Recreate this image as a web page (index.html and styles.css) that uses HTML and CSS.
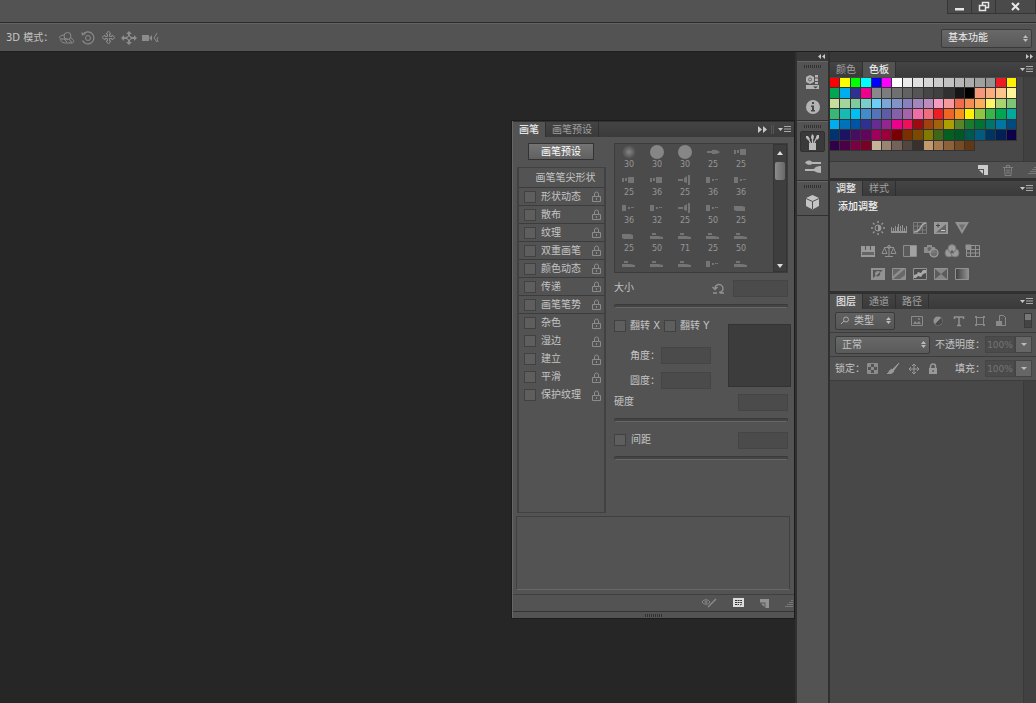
FILE: index.html
```html
<!DOCTYPE html>
<html lang="zh-CN">
<head>
<meta charset="utf-8">
<title>画笔</title>
<link rel="stylesheet" href="styles.css">
</head>
<body>
<svg class="defs" aria-hidden="true">
  <symbol id="menu" viewBox="0 0 13 8"><path d="M0 2h5L2.500 5z" fill="#c8c8c8"/><path d="M6 .5h7M6 3h7M6 5.500h7" stroke="#a8a8a8"/></symbol>
  <symbol id="lock" viewBox="0 0 9 11"><path d="M2.500 5V3a2 2 0 0 1 4 0v2M.5 5.500h8v5h-8zM4.500 7v2" fill="none" stroke="#8c8c8c"/></symbol>
  <symbol id="page" viewBox="0 0 10 10"><path d="M0 0h10v10H6V4H0z"/><path d="M1 5h4v4z"/></symbol>
  <symbol id="grab" viewBox="0 0 8 8"><path d="M0 7.500h8M2 5.500h6M4 3.500h4M6 1.500h2" stroke="#777"/></symbol>
</svg>

<header class="titlebar">
  <button class="win" aria-label="最小化"><svg width="12" height="12"><path d="M1 7h9v2.500H1z" fill="#e6e6e6"/></svg></button>
  <button class="win" aria-label="还原"><svg width="12" height="12" fill="none" stroke="#e6e6e6" stroke-width="1.500"><path d="M4.500 4V1.500h6v5H8"/><path d="M1.500 4.500h6v5h-6z"/></svg></button>
  <button class="win win-close" aria-label="关闭"><svg width="12" height="12"><path d="M2 2l7 7M9 2L2 9" stroke="#e6e6e6" stroke-width="2"/></svg></button>
</header>

<div class="optionbar">
  <span class="mode">3D 模式：</span>
  <div class="modes">
    <button aria-label="旋转"><svg width="17" height="14" fill="none" stroke="#8c8c8c"><circle cx="9.500" cy="5" r="3.500"/><path d="M6 4C1 4 0 8 4 8h6M3 8c-1 3 2 4 6 4h5c3-1 2-3-1-5M6 8l3 3M11 8l3 4"/></svg></button>
    <button aria-label="滚动"><svg width="16" height="14" fill="none" stroke="#8c8c8c"><circle cx="8" cy="7" r="2.500"/><path d="M3 3.500A6 6 0 1 1 2.500 9.500M1.500 3h4M2 1.500l1 3" stroke-width="1.200"/></svg></button>
    <button aria-label="拖动"><svg width="15" height="15" fill="none" stroke="#8c8c8c"><path d="M6.500 6.500V4H5l2.500-3L10 4H8.500v2.500H11V5l3 2.500L11 10V8.500H8.500V11H10l-2.500 3L5 11h1.500V8.500H4V10L1 7.500 4 5v1.500z"/></svg></button>
    <button aria-label="滑动"><svg width="16" height="14" fill="#8c8c8c"><path d="M8 0l3 3H9v2l2 1h2V4l3 3-3 3V8h-2L9 9v2h2l-3 3-3-3h2V9L5 8H3v2L0 7l3-3v2h2l2-1V3H5z"/><circle cx="8" cy="7" r="1.500" fill="#535353"/></svg></button>
    <button aria-label="缩放"><svg width="17" height="12"><path d="M0 3h7v6H0zM7 6l3-3v6z" fill="#8c8c8c"/><path d="M15 1l-3 5 3 4M16 5l-1 2 1 3" fill="none" stroke="#8c8c8c"/></svg></button>
  </div>
  <select class="select workspace-select" aria-label="工作区"><option>基本功能</option></select>
</div>

<div class="workspace">
  <main class="canvas">
    <section class="brush" aria-label="画笔">
      <div class="tabs">
        <button class="tab active">画笔</button><button class="tab">画笔预设</button>
        <span class="spacer"></span>
        <svg width="9" height="7"><path d="M0 0l4 3.500L0 7zM5 0l4 3.500L5 7z" fill="#c8c8c8"/></svg>
        <span class="split"></span>
        <button class="plain" aria-label="菜单"><svg width="13" height="8"><use href="#menu"/></svg></button>
      </div>
      <div class="brush-body">
        <div class="brush-left">
          <button class="preset">画笔预设</button>
          <div class="options" id="options"><button class="tip">画笔笔尖形状</button></div>
        </div>
        <div class="brush-right">
          <div class="tips">
            <div class="tip-grid" id="tips"></div>
            <div class="scroll"><svg width="6" height="4"><path d="M0 4l3-4 3 4z" fill="#ddd"/></svg><span class="thumb"></span><svg width="6" height="4"><path d="M0 0h6L3 4z" fill="#ddd"/></svg></div>
          </div>
          <div class="row size-row">
            <label for="size">大小</label><span class="spacer"></span>
            <button class="plain" aria-label="恢复"><svg width="13" height="12" fill="none" stroke="#929292" stroke-width="1.400"><path d="M3 6a4 4 0 1 1 4 4.500M.5 5L3 7.500 5.500 5M1 11h4M8 11h4"/></svg></button>
            <input class="field wide" id="size" type="text">
          </div>
          <input class="slider" type="range" aria-label="大小滑块">
          <div class="shape">
            <div class="shape-fields">
              <div class="flips"><label><input type="checkbox"> 翻转 X</label><label><input type="checkbox"> 翻转 Y</label></div>
              <div class="row angle"><label for="angle">角度：</label><input class="field" id="angle" type="text"></div>
              <div class="row angle"><label for="round">圆度：</label><input class="field" id="round" type="text"></div>
            </div>
            <div class="compass"></div>
          </div>
          <div class="row hard-row"><label for="hard">硬度</label><span class="spacer"></span><input class="field" id="hard" type="text"></div>
          <input class="slider" type="range" aria-label="硬度滑块">
          <div class="row space-row"><label><input type="checkbox"> 间距</label><span class="spacer"></span><input class="field" type="text" aria-label="间距值"></div>
          <input class="slider" type="range" aria-label="间距滑块">
        </div>
      </div>
      <div class="preview"></div>
      <div class="brush-foot">
        <button class="plain" aria-label="切换预览"><svg width="16" height="10" fill="none" stroke="#8a8a8a"><path d="M1 4c2-3 6-3 8 0-2 3-6 3-8 0z"/><path d="M15 1L9 7M10 6L7 9" stroke-width="1.500"/><circle cx="5" cy="4" r="1"/></svg></button>
        <button class="plain" aria-label="预设管理器"><svg width="11" height="10"><path d="M0 0h11v9H0z" fill="#ddd"/><path d="M2 2.500h7M2 4.500h7M2 6.500h4M7 7l2-1" stroke="#333" stroke-dasharray="2 .6"/></svg></button>
        <button class="plain" aria-label="新建画笔"><svg width="9" height="9" fill="#929292"><use href="#page"/></svg></button>
        <svg width="8" height="8"><use href="#grab"/></svg>
      </div>
      <div class="handle"><span class="grip"></span></div>
    </section>
  </main>

  <aside class="strip">
    <div class="dock-top"><svg width="7" height="5"><path d="M3 0v5L0 2.500zM7 0v5L4 2.500z" fill="#c8c8c8"/></svg></div>
    <div class="group"><span class="grip"></span>
      <button aria-label="历史记录"><svg width="15" height="16" fill="#b4b4b4"><path d="M1 3l4-2 4 2v5l-4 2-4-2z"/><circle cx="5" cy="5.500" r="1.500" fill="none" stroke="#666"/><path d="M10 1h3v2.500h-3zM10 4.500h3V7h-3zM10 8h3v2h-3zM1 11h13v4H1z"/><path d="M8 12.500h5l-2.500 2z" fill="#444"/></svg></button>
      <button aria-label="信息"><svg width="16" height="16"><circle cx="8" cy="8" r="7" fill="#b4b4b4"/><path d="M7 3h2v2H7zM6 6.500h3V11h1v1.500H6V11h1V8H6z" fill="#484848"/></svg></button>
    </div>
    <div class="group"><span class="grip"></span>
      <button class="on" aria-label="画笔"><svg width="15" height="18" fill="#bcbcbc"><path d="M4 10h7v7H4z"/><path d="M5.500 10L3 5M7.500 10V4M9 10l3-6" stroke="#bcbcbc" stroke-width="1.300"/><path d="M1 3l2 0 2 3-2 1-2-2zM6 4l1-3 2 2-.5 3h-2zM11 4l1-2 2 0 0 3-2 2z"/></svg></button>
      <button aria-label="画笔预设"><svg width="18" height="15" fill="#b4b4b4"><path d="M1 4c2-3 5-3 7-1h9v2H8C5 7 3 5 1 4zM1 10h9c2-3 5-3 7-3l0 7c-3 0-5-1-7-2H1z"/></svg></button>
    </div>
    <div class="group"><span class="grip"></span>
      <button aria-label="3D"><svg width="15" height="16"><path d="M7.500 1L14 4v8l-6.500 3.500L1 12V4z" fill="#c4c4c4"/><path d="M1 4.500l6.500 3 6.500-3M7.500 7.500V15" fill="none" stroke="#505050"/></svg></button>
    </div>
  </aside>

  <aside class="panels">
    <div class="dock-top"><svg width="7" height="5"><path d="M0 0v5l3-2.500zM4 0v5l3-2.500z" fill="#c8c8c8"/></svg></div>
    <section class="panel">
      <div class="tabs"><button class="tab">颜色</button><button class="tab active">色板</button><span class="spacer"></span><button class="plain" aria-label="菜单"><svg width="13" height="8"><use href="#menu"/></svg></button></div>
      <div class="swatch-area"><div class="swatches" id="swatches"></div><span class="track"></span></div>
      <div class="foot"><button class="plain" aria-label="新建色板"><svg width="10" height="10" fill="#ccc"><use href="#page"/></svg></button><button class="plain" aria-label="删除"><svg width="10" height="11" fill="none" stroke="#808080"><path d="M0 2.500h10M3.500 2V.5h3V2M1.500 3l.5 7.500h6l.5-7.500M4 4v5M6 4v5"/></svg></button><svg width="8" height="8"><use href="#grab"/></svg></div>
    </section>
    <section class="panel">
      <div class="tabs"><button class="tab active">调整</button><button class="tab">样式</button><span class="spacer"></span><button class="plain" aria-label="菜单"><svg width="13" height="8"><use href="#menu"/></svg></button></div>
      <div class="adjust">
        <h2>添加调整</h2>
        <div class="adj-row">
          <button aria-label="亮度"><svg width="16" height="14"><circle cx="8" cy="7" r="3" fill="none" stroke="#999"/><path d="M8 4a3 3 0 0 1 0 6z" fill="#999"/><path d="M8 0v2M8 12v2M1 7h2M13 7h2M3 2l1.500 1.500M11.500 10.500L13 12M3 12l1.500-1.500M11.500 3.500L13 2" stroke="#999" stroke-width="1.400"/></svg></button>
          <button aria-label="色阶"><svg width="16" height="14"><path d="M0 10h16v2H0zM0 6h1v4H0zM2 7h1v3H2zM4 5h1v5H4zM6 6h1v4H6zM7 3h1v7H7zM9 5h1v5H9zM11 4h1v6h-1zM13 7h1v3h-1zM15 5h1v5h-1z" fill="#949494"/></svg></button>
          <button aria-label="曲线"><svg width="16" height="14" fill="none" stroke="#7c7c7c"><path d="M1.500 1.500h13v11h-13zM5.500 2v10M10.500 2v10M2 5h12M2 9h12"/><path d="M2 11c8 0 5-8 12-9" stroke="#aaa" stroke-width="1.500"/></svg></button>
          <button aria-label="曝光度"><svg width="16" height="14"><path d="M1 1h14v12H1z" fill="#999"/><path d="M3 11.500L13 3v8.500z" fill="#666"/><path d="M3 4.500h4M5 2.500v4" stroke="#444"/><path d="M8 9.500h4" stroke="#ccc"/></svg></button>
          <button aria-label="自然饱和度"><svg width="16" height="14"><path d="M1 1h14L8 13z" fill="#929292"/><path d="M5 3.500h6L8 9z" fill="#707070"/></svg></button>
        </div>
        <div class="adj-row">
          <button aria-label="色相"><svg width="16" height="14"><path d="M1 2h14v11H1z" fill="#999"/><path d="M2 8h12v3H2z" fill="#656565"/><path d="M5.500 2v4M10.500 2v4" stroke="#555"/></svg></button>
          <button aria-label="色彩平衡"><svg width="16" height="14" fill="none" stroke="#929292"><path d="M8 1v11M4 12.500h8M3 3.500h10M3.500 4L1 9.500h5zM12.500 4L10 9.500h5z"/><circle cx="8" cy="3" r="1.500"/></svg></button>
          <button aria-label="黑白"><svg width="16" height="14"><path d="M1.500 1.500h13v11h-13z" fill="#5b5b5b" stroke="#8c8c8c"/><path d="M8 2h6v10H8z" fill="#a2a2a2"/></svg></button>
          <button aria-label="照片滤镜"><svg width="16" height="14"><path d="M1 3h3V1h5v2h3v6H1z" fill="#8c8c8c"/><circle cx="6.500" cy="5" r="2" fill="#666"/><circle cx="11" cy="9" r="4" fill="#777" fill-opacity=".8" stroke="#a0a0a0" stroke-width="1.200"/></svg></button>
          <button aria-label="通道混合器"><svg width="16" height="14" fill="#999" stroke="#777"><circle cx="5" cy="9" r="4"/><circle cx="11" cy="9" r="4"/><circle cx="8" cy="4.500" r="4"/><path d="M8 6l2 3H6z" fill="#444"/></svg></button>
          <button aria-label="颜色查找"><svg width="16" height="14" fill="none" stroke="#929292"><path d="M1.500 1.500h13v11h-13zM5.500 2v10M10.500 2v10M2 5.500h12M2 9h12"/><path d="M1 1h5v4H1z" fill="#929292"/></svg></button>
        </div>
        <div class="adj-row">
          <button aria-label="反相"><svg width="16" height="14"><path d="M1 1h14v12H1z" fill="#929292"/><path d="M3 3h10L3 11z" fill="#555"/><circle cx="8" cy="7" r="3" fill="#929292"/><path d="M10 5a3 3 0 0 1-4 4z" fill="#555"/></svg></button>
          <button aria-label="色调分离"><svg width="16" height="14"><path d="M1.500 1.500h13v11h-13z" fill="#686868" stroke="#929292"/><path d="M2 9l8-7h4L2 12zM9 12l5-4v4z" fill="#8e8e8e"/></svg></button>
          <button aria-label="阈值"><svg width="16" height="14"><path d="M1.500 1.500h13v11h-13z" fill="#4c4c4c" stroke="#929292"/><path d="M2 8l3-1 1-2 3 1 2-3h3v3l-3 1-2 3-3-1-2 2H2z" fill="#aaa"/></svg></button>
          <button aria-label="可选颜色"><svg width="16" height="14"><path d="M1.500 1.500h13v11h-13z" fill="#888" stroke="#929292"/><path d="M2 2l6 5-6 5zM14 2L8 7l6 5z" fill="#5c5c5c"/></svg></button>
          <button aria-label="渐变映射"><svg width="16" height="14"><linearGradient id="fade"><stop stop-color="#3e3e3e"/><stop offset="1" stop-color="#929292"/></linearGradient><path d="M1.500 1.500h13v11h-13z" fill="url(#fade)" stroke="#929292"/></svg></button>
        </div>
      </div>
    </section>
    <section class="panel layers">
      <div class="tabs"><button class="tab active">图层</button><button class="tab">通道</button><button class="tab">路径</button><span class="spacer"></span><button class="plain" aria-label="菜单"><svg width="13" height="8"><use href="#menu"/></svg></button></div>
      <div class="bar filter">
        <select class="select kind" aria-label="类型"><option>类型</option></select>
        <div class="filters">
          <button aria-label="像素"><svg width="12" height="12"><path d="M.5 1.500h11v9H.5z" fill="none" stroke="#8a8a8a"/><path d="M2 9l2-3 2 2 2-2 2 3z" fill="#8a8a8a"/><circle cx="8" cy="4" r="1" fill="#8a8a8a"/></svg></button>
          <button aria-label="调整图层"><svg width="12" height="12"><circle cx="6" cy="6" r="4.500" fill="#929292"/><path d="M3 9l6-6a4 4 0 0 1-6 6z" fill="#4a4a4a"/></svg></button>
          <button aria-label="文字图层"><svg width="12" height="12"><path d="M1.500 4V2h9v2M6 2v8.500M4 10.500h4" fill="none" stroke="#929292" stroke-width="1.500"/></svg></button>
          <button aria-label="形状图层"><svg width="12" height="12" fill="none" stroke="#8a8a8a"><path d="M2.500 1v10M9.500 1v10M1 2.500h10M1 9.500h10"/><path d="M1 1h2v2H1zM9 1h2v2H9zM1 9h2v2H1zM9 9h2v2H9z" fill="#8a8a8a" stroke="none"/></svg></button>
          <button aria-label="智能对象"><svg width="12" height="12"><path d="M4.500.5h4l2 2v8h-6z" fill="none" stroke="#8a8a8a"/><path d="M1 6h6v5H1z" fill="#8a8a8a"/></svg></button>
        </div>
        <button class="toggle" aria-label="开关过滤"></button>
      </div>
      <div class="bar">
        <select class="select blend" aria-label="混合模式"><option>正常</option></select>
        <label class="push" for="opacity">不透明度：</label><input class="percent" id="opacity" value="100%"><button class="drop" aria-label="不透明度选项"></button>
      </div>
      <div class="bar">
        <span>锁定：</span>
        <div class="locks">
          <button aria-label="透明像素"><svg width="11" height="11"><path d="M.5.500h10v10H.5z" fill="none" stroke="#8c8c8c"/><path d="M1 1h3v3H1zM7 1h3v3H7zM4 4h3v3H4zM1 7h3v3H1zM7 7h3v3H7z" fill="#8c8c8c"/></svg></button>
          <button aria-label="图像像素"><svg width="14" height="11"><path d="M13 0L7 6l1 1zM6 6l2 2c-1 2-3 3-7 3 2-1 2-4 5-5z" fill="#999" stroke="#999"/></svg></button>
          <button aria-label="位置"><svg width="12" height="12" fill="none" stroke="#999"><path d="M6 1v10M1 6h10M4 3l2-2 2 2M4 9l2 2 2-2M3 4L1 6l2 2M9 4l2 2-2 2"/></svg></button>
          <button aria-label="全部"><svg width="10" height="12"><path d="M2.500 5V3.500a2.500 2.500 0 0 1 5 0V5" fill="none" stroke="#999" stroke-width="1.500"/><path d="M1 5h8v6H1z" fill="#999"/><path d="M5 7v2" stroke="#444"/></svg></button>
        </div>
        <label class="push" for="fill">填充：</label><input class="percent" id="fill" value="100%"><button class="drop" aria-label="填充选项"></button>
      </div>
      <div class="layer-list"><span class="track"></span></div>
    </section>
  </aside>
</div>
<script src="script.js"></script>
</body>
</html>
```
FILE: styles.css
```css
* { box-sizing: border-box; }
body {
  margin: 0;
  height: 100vh;
  display: flex;
  flex-direction: column;
  overflow: hidden;
  background: #262626;
  color: #c4c4c4;
  font: 10px/14px "DejaVu Sans", "Noto Sans CJK SC", sans-serif;
}
button, input, select { font: inherit; color: inherit; margin: 0; padding: 0; }
button { border: 0; background: none; display: flex; align-items: center; justify-content: center; }
svg { display: block; flex: none; }
.defs { display: none; }
.spacer { flex: 1; }
.titlebar {
  flex: none;
  height: 23px;
  display: flex;
  justify-content: flex-end;
  align-items: flex-start;
  background: #535353;
  border-bottom: 1px solid #2c2c2c;
}
.win { width: 24px; height: 14px; background: #4a4a4a; border: 1px solid #353535; border-width: 0 0 1px 1px; }
.win-close { width: 41px; border-right-width: 1px; }
.optionbar {
  flex: none;
  height: 28px;
  display: flex;
  align-items: center;
  padding: 0 4px 0 6px;
  background: #535353;
  border-top: 1px solid #636363;
}
.mode { width: 52px; white-space: nowrap; }
.modes { display: flex; gap: 5px; flex: 1; }
.select {
  appearance: none;
  border: 1px solid #3a3a3a;
  border-radius: 2px;
  background: url("data:image/svg+xml,%3Csvg xmlns='http://www.w3.org/2000/svg' width='5' height='7'%3E%3Cpath d='M0 3l2.500-3L5 3zM0 4h5L2.500 7z' fill='%23bbb'/%3E%3C/svg%3E") no-repeat right 3px center, linear-gradient(#686868, #5a5a5a);
  height: 18px;
  padding-left: 6px;
}
.workspace-select { width: 91px; height: 19px; margin-top: 1px; color: #f0f0f0; }
.workspace { flex: 1; min-height: 0; display: flex; border-top: 1px solid #1e1e1e; }
.canvas { flex: 1; display: flex; justify-content: flex-end; align-items: flex-start; padding: 69px 1px 0 0; }

.tabs { display: flex; align-items: stretch; height: 16px; padding-right: 3px; background: linear-gradient(#444, #3a3a3a); border-top: 1px solid #303030; }
.tabs > svg, .tabs > .plain { align-self: center; }
.tab { padding: 0 6px; color: #a0a0a0; border-right: 1px solid #303030; }
.tab.active { background: #535353; color: #e8e8e8; font-weight: 500; }
.split { width: 3px; margin: 3px 4px; border: 1px solid #555; border-width: 0 1px; }

.brush { width: 282px; background: #535353; border-left: 1px solid #666; outline: 1px solid #1c1c1c; }
.brush-body { display: flex; gap: 8px; padding: 6px 6px 3px 4px; height: 379px; }
.brush-left { width: 89px; display: flex; flex-direction: column; }
.preset { width: 66px; height: 17px; margin: 0 0 7px 11px; border: 1px solid #333; background: linear-gradient(#747474, #606060); color: #fff; }
.options { flex: 1; border: 2px solid #414141; border-width: 1px 2px; }
.tip { width: 100%; height: 20px; padding-left: 8px; border-bottom: 1px solid #3c3c3c; }
.option { display: flex; align-items: center; height: 18px; padding: 0 3px 0 5px; }
.option.lined { border-bottom: 1px solid #3c3c3c; }
.option label { flex: 1; display: flex; align-items: center; gap: 5px; }
input[type="checkbox"] { appearance: none; flex: none; width: 12px; height: 12px; border: 1px solid #414141; background: #5e5e5e; }
.brush-right { flex: 1; min-width: 0; }
.tips { height: 130px; display: flex; border: 1px solid #3c3c3c; background: #4b4b4b; overflow: hidden; margin-bottom: 6px; }
.tip-grid { flex: 1; display: grid; grid-template-columns: repeat(5, 28px); grid-auto-rows: 28px; }
.brush-tip { display: flex; flex-direction: column; align-items: center; font-size: 8px; line-height: 10px; color: #969696; }
.brush-tip svg { width: 16px; height: 16px; }
.scroll { width: 14px; display: flex; flex-direction: column; align-items: center; gap: 7px; padding: 6px 0 3px; background: #3e3e3e; border: 1px solid #353535; }
.thumb { width: 10px; height: 18px; border-radius: 2px; background: linear-gradient(90deg, #8b8b8b, #686868); }
.scroll svg:last-child { margin-top: auto; }
.row { display: flex; align-items: center; height: 18px; }
.row > label { white-space: nowrap; display: flex; align-items: center; gap: 5px; }
.field { width: 50px; height: 17px; border: 1px solid #454545; background: #4b4b4b; }
.field.wide { width: 55px; margin-left: 8px; }
.slider { appearance: none; display: block; width: 100%; height: 4px; margin: 7px 0 0; border: 1px solid #3a3a3a; border-bottom-color: #666; border-radius: 2px; background: #444; }
.slider::-webkit-slider-thumb { appearance: none; width: 0; height: 0; }
.shape { display: flex; justify-content: space-between; height: 80px; padding-top: 8px; margin-right: -3px; }
.flips { display: flex; gap: 4px; height: 18px; margin: 0 0 9px; padding-top: 1px; }
.flips label { display: flex; align-items: center; gap: 4px; white-space: nowrap; }
.angle { height: 25px; padding-left: 16px; }
.angle .field { margin-left: auto; }
.shape-fields { width: 97px; }
.compass { width: 63px; height: 63px; margin-top: 8px; border: 1px solid #333; background: #3c3c3c; }
.hard-row { margin-top: 5px; }
.space-row { margin-top: 9px; }
.preview { height: 74px; margin: 0 4px 4px 3px; border: 1px solid #404040; border-bottom-color: #686868; }
.brush-foot { height: 17px; display: flex; align-items: center; justify-content: flex-end; gap: 16px; border-top: 1px solid #404040; padding-right: 1px; }
.handle { height: 7px; border-top: 1px solid #333; display: grid; place-items: center; }
.grip { display: block; width: 18px; height: 3px; background: repeating-linear-gradient(90deg, #303030 0 1px, #565656 1px 2px); }

.strip { width: 34px; background: #535353; border-left: 2px solid #303030; border-right: 1px solid #303030; }
.dock-top { height: 9px; display: flex; align-items: center; justify-content: flex-end; padding-right: 3px; background: #383838; }
.group { display: flex; flex-direction: column; align-items: center; padding: 3px 0 1px; border-top: 1px solid #666; border-bottom: 1px solid #303030; }
.group .grip { margin-bottom: 1px; }
.group button { width: 25px; height: 25px; }
.group button.on { height: 21px; margin: 2px 0; background: #3a3a3a; border: 1px solid #303030; border-radius: 2px; }
.panels { width: 207px; display: flex; flex-direction: column; background: #535353; border-left: 1px solid #303030; }
.panel { border-bottom: 2px solid #303030; }
.swatch-area { height: 84px; display: flex; justify-content: space-between; background: #484848; }
.swatches { width: 187px; height: 74px; padding: 1px 0 0; display: grid; grid-template-columns: repeat(18, 1fr); grid-template-rows: repeat(7, 1fr); }
.swatch { border: 1px solid #333; border-width: 0 1px 1px 0; }
.track { width: 13px; background: #414141; border-left: 1px solid #3a3a3a; }
.foot { height: 17px; display: flex; justify-content: flex-end; align-items: center; gap: 15px; border-top: 1px solid #3a3a3a; }
.adjust { height: 95px; padding: 4px 34px 0 8px; }
.adjust h2 { margin: 0 0 7px; font-size: 10px; line-height: 14px; font-weight: 500; color: #f2f2f2; }
.adj-row { height: 23px; display: flex; justify-content: center; gap: 5px; }
.adj-row button { height: 14px; }
.layers { flex: 1; display: flex; flex-direction: column; border: 0; }
.bar { height: 24px; flex: none; display: flex; align-items: center; padding: 0 4px 0 5px; border-bottom: 1px solid #3c3c3c; white-space: nowrap; }
.kind { width: 60px; padding-left: 18px; background-image: url("data:image/svg+xml,%3Csvg xmlns='http://www.w3.org/2000/svg' width='5' height='7'%3E%3Cpath d='M0 3l2.500-3L5 3zM0 4h5L2.500 7z' fill='%23bbb'/%3E%3C/svg%3E"), url("data:image/svg+xml,%3Csvg xmlns='http://www.w3.org/2000/svg' width='9' height='9'%3E%3Ccircle cx='5' cy='3.500' r='2.500' fill='none' stroke='%23aaa'/%3E%3Cpath d='M3 5L0 8' stroke='%23aaa'/%3E%3C/svg%3E"), linear-gradient(#606060, #565656); background-repeat: no-repeat; background-position: right 3px center, 5px center, 0 0; }
.filters { display: flex; gap: 9px; margin-left: 16px; }
.toggle { width: 8px; height: 15px; margin-left: auto; border: 1px solid #3a3a3a; background: linear-gradient(#777 50%, #444 50%); }
.blend { width: 95px; }
.push { margin-left: auto; }
.percent { width: 30px; height: 17px; border: 1px solid #454545; background: #4b4b4b; color: #757575; font-size: 9px; text-align: center; }
.drop { width: 17px; height: 17px; border: 1px solid #444; background: #666; }
.drop::before { content: ""; border: 3px solid transparent; border-top-color: #bbb; border-bottom: 0; }
.locks { display: flex; align-items: center; gap: 8px; margin-left: 2px; }
.layer-list { flex: 1; display: flex; justify-content: flex-end; background: #484848; }
```
FILE: script.js
```js
const swatchRows = [
  'ff0000 ffff00 00ff00 00ffff 0000ff ff00ff ffffff ebebeb e1e1e1 d7d7d7 cccccc c2c2c2 b7b7b7 acacac a0a0a0 959595 ed1c24 fff200',
  '00a651 00aeef 2e3192 ec008c 898989 7d7d7d 707070 626262 555555 464646 404040 303030 161616 000000 f7977a fbad82 fdc68c fff799',
  'c6df9c a4d49d 81ca9d 7bcdc9 6ccff7 7ca6d8 8293ca 8881be a286bd bc8cbf f49bc1 f5999d f16c4d f68e54 fbaf5a fff467 acd372 7dc473',
  '39b778 16bcb4 00bff3 438ccb 5573b7 5e5ca7 855fa8 a763a9 ef6ea8 f16d7e ee1d24 f16522 f7941d fff100 8fc63d 37b44a 00a650 00a99e',
  '00aeef 0072bc 0054a5 2f3192 652c91 91278f ed008c ee105a 9d0a0f a1410d a36209 aba000 588528 197b30 007236 00736a 0076a4 004a80',
  '003370 1d1363 450e61 62055f 9e005c 9d0039 790000 7b3000 7c4900 827a00 3e6617 045f20 005824 005951 005b7e 003562 002056 0c004b',
  '30004a 4b0048 7a0045 7a0026 c7b198 9a8575 726257 524740 37302c c49a6c a77b50 8c623a 744b24 613813'
];
document.getElementById('swatches').innerHTML = swatchRows.join(' ').split(' ')
  .map(c => `<span class="swatch" style="background:#${c}"></span>`).join('');

const options = ['形状动态', '散布', '纹理', '双重画笔', '颜色动态', '传递', '画笔笔势', '杂色', '湿边', '建立', '平滑', '保护纹理'];
document.getElementById('options').insertAdjacentHTML('beforeend', options.map((name, i) =>
  `<div class="option${i < 7 ? ' lined' : ''}"><label><input type="checkbox">${name}</label><svg width="9" height="11"><use href="#lock"/></svg></div>`).join(''));

const shapes = {
  soft: '<radialGradient id="soft"><stop stop-color="#858585"/><stop offset="1" stop-color="#4b4b4b"/></radialGradient><circle cx="8" cy="8" r="7" fill="url(#soft)"/>',
  hard: '<circle cx="8" cy="8" r="7" fill="#868686"/>',
  point: '<path d="M2 7h5v2H2zM7 6c4-1 6 1 8 2-2 2-4 2-8 2z"/>',
  flat: '<path d="M1 6h2v4H1zM4 6h2v3H4zM7 5h6v6H7z"/>',
  fan: '<path d="M1 7h5v2H1zM7 6l3-2v7l-3-1zM11 3h2v10h-2z"/>',
  stub: '<path d="M1 5h4v6H1zM7 7h2v2H7zM10 7h3v1h-3z"/>',
  round: '<path d="M1 6h8l3 1v4H3L1 10z"/>',
  pencil: '<path d="M3 5h4v2H3zM1 8h8l5 1v2H1z"/>'
};
const tips = [
  ['soft', 30], ['hard', 30], ['hard', 30], ['point', 25], ['flat', 25],
  ['flat', 25], ['flat', 36], ['fan', 25], ['stub', 36], ['stub', 36],
  ['stub', 36], ['stub', 32], ['fan', 25], ['stub', 50], ['round', 25],
  ['round', 25], ['pencil', 50], ['pencil', 71], ['pencil', 25], ['pencil', 50],
  ['pencil', ''], ['pencil', ''], ['pencil', ''], ['stub', ''], ['pencil', '']
];
document.getElementById('tips').innerHTML = tips
  .map(([shape, size]) => `<div class="brush-tip"><svg viewBox="0 0 16 16" fill="#757575">${shapes[shape]}</svg><span>${size}</span></div>`).join('');
```
